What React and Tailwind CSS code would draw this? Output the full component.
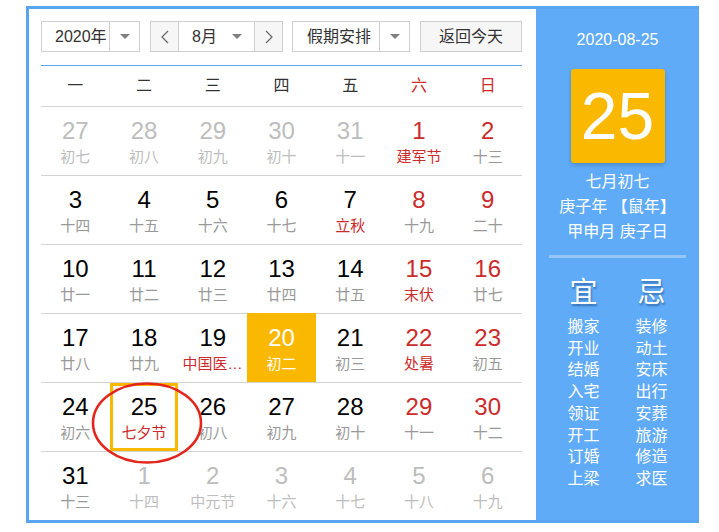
import React from 'react';

const weekdays = ['一', '二', '三', '四', '五', '六', '日'];

// out = other month, wk = weekend number red, hol = lunar text red
const rows = [
  [
    { d: 27, l: '初七', out: true },
    { d: 28, l: '初八', out: true },
    { d: 29, l: '初九', out: true },
    { d: 30, l: '初十', out: true },
    { d: 31, l: '十一', out: true },
    { d: 1, l: '建军节', wk: true, hol: true },
    { d: 2, l: '十三', wk: true },
  ],
  [
    { d: 3, l: '十四' },
    { d: 4, l: '十五' },
    { d: 5, l: '十六' },
    { d: 6, l: '十七' },
    { d: 7, l: '立秋', hol: true },
    { d: 8, l: '十九', wk: true },
    { d: 9, l: '二十', wk: true },
  ],
  [
    { d: 10, l: '廿一' },
    { d: 11, l: '廿二' },
    { d: 12, l: '廿三' },
    { d: 13, l: '廿四' },
    { d: 14, l: '廿五' },
    { d: 15, l: '末伏', wk: true, hol: true },
    { d: 16, l: '廿七', wk: true },
  ],
  [
    { d: 17, l: '廿八' },
    { d: 18, l: '廿九' },
    { d: 19, l: '中国医师节', hol: true },
    { d: 20, l: '初二', today: true },
    { d: 21, l: '初三' },
    { d: 22, l: '处暑', wk: true, hol: true },
    { d: 23, l: '初五', wk: true },
  ],
  [
    { d: 24, l: '初六' },
    { d: 25, l: '七夕节', hol: true, selected: true },
    { d: 26, l: '初八' },
    { d: 27, l: '初九' },
    { d: 28, l: '初十' },
    { d: 29, l: '十一', wk: true },
    { d: 30, l: '十二', wk: true },
  ],
  [
    { d: 31, l: '十三' },
    { d: 1, l: '十四', out: true },
    { d: 2, l: '中元节', out: true },
    { d: 3, l: '十六', out: true },
    { d: 4, l: '十七', out: true },
    { d: 5, l: '十八', out: true },
    { d: 6, l: '十九', out: true },
  ],
];

const good = ['搬家', '开业', '结婚', '入宅', '领证', '开工', '订婚', '上梁'];
const bad = ['装修', '动土', '安床', '出行', '安葬', '旅游', '修造', '求医'];

const Caret = () => (
  <svg width="10" height="6" viewBox="0 0 10 6">
    <path d="M0 0 L10 0 L5 5 Z" fill="#808080" />
  </svg>
);

const Chevron = ({ dir }) => (
  <svg width="8" height="14" viewBox="0 0 8 14">
    <polyline
      points={dir === 'left' ? '7,1 1,7 7,13' : '1,1 7,7 1,13'}
      fill="none"
      stroke="#666"
      strokeWidth="1.2"
    />
  </svg>
);

const DayCell = ({ cell }) => {
  let numColor = 'text-black';
  let lunarColor = 'text-[#999]';
  if (cell.wk) numColor = 'text-[#cc2b2b]';
  if (cell.hol) lunarColor = 'text-[#cc2b2b]';
  if (cell.out) {
    numColor = 'text-[#bdbdbd]';
    lunarColor = 'text-[#bdbdbd]';
  }
  if (cell.today) {
    numColor = 'text-white';
    lunarColor = 'text-white';
  }
  return (
    <div
      className={`flex h-[69px] min-w-0 flex-col items-center border-t pt-[10px] ${
        cell.today ? 'border-[#fbb800] bg-[#fbb800]' : 'border-[#d4d4d4]'
      } ${cell.selected ? 'shadow-[inset_0_0_0_3px_#fbb800]' : ''}`}
    >
      <div className={`text-[24px] leading-[28px] ${numColor}`}>{cell.d}</div>
      <div className={`mt-[3px] w-full truncate px-[4px] text-center text-[15px] leading-[18px] ${lunarColor}`}>
        {cell.l}
      </div>
    </div>
  );
};

const App = () => {
  return (
    <div className="relative min-h-screen bg-white pl-[26px] pt-[6px] font-['Liberation_Sans','Noto_Sans_CJK_SC',sans-serif]">
      <div className="flex h-[517px] w-[673px] border-[3px] border-r-0 border-[#58a5f2]">
        {/* calendar */}
        <div className="flex w-[507px] flex-col overflow-hidden bg-white pl-3 pr-[14px] pt-3">
          <div className="flex h-8 items-stretch text-[16px] text-[#333]">
            <div className="flex w-[99px] border border-[#cfcfcf]">
              <div className="flex flex-1 items-center pl-[13px]">2020年</div>
              <div className="flex w-[30px] items-center justify-center border-l border-[#cfcfcf]">
                <Caret />
              </div>
            </div>
            <div className="ml-[10px] flex w-[133px] border border-[#cfcfcf]">
              <div className="flex w-[27px] items-center justify-center bg-[#f6f6f6]">
                <Chevron dir="left" />
              </div>
              <div className="flex flex-1 items-center justify-between border-x border-[#cfcfcf] pl-[13px] pr-[12px]">
                <span>8月</span>
                <Caret />
              </div>
              <div className="flex w-[27px] items-center justify-center bg-[#f6f6f6]">
                <Chevron dir="right" />
              </div>
            </div>
            <div className="ml-[9px] flex w-[118px] border border-[#cfcfcf]">
              <div className="flex flex-1 items-center pl-[14px]">假期安排</div>
              <div className="flex w-[30px] items-center justify-center border-l border-[#cfcfcf]">
                <Caret />
              </div>
            </div>
            <button className="ml-[10px] flex w-[102px] items-center justify-center border border-[#cfcfcf] bg-[#f6f6f6] text-[#333]">
              返回今天
            </button>
          </div>

          <div className="mt-[13px] grid h-[42px] grid-cols-7 items-center border-t border-[#5aa7f5] text-[16px]">
            {weekdays.map((w, i) => (
              <div key={w} className={`text-center ${i >= 5 ? 'text-[#cc2b2b]' : 'text-[#333]'}`}>
                {w}
              </div>
            ))}
          </div>

          {rows.map((row, ri) => (
            <div key={ri} className="grid grid-cols-7">
              {row.map((cell, ci) => (
                <DayCell key={ci} cell={cell} />
              ))}
            </div>
          ))}
        </div>

        {/* side panel */}
        <aside className="flex w-[163px] flex-col items-center bg-[#5fabf8] pt-[21px] text-white">
          <div className="text-[16px] leading-[20px]">2020-08-25</div>
          <div className="mt-[19px] flex h-[94px] w-[94px] items-center justify-center rounded-[3px] bg-[#fbb800] shadow-[0_2px_4px_rgba(0,0,0,0.2)]">
            <span className="text-[66px] leading-none">25</span>
          </div>
          <div className="mt-[6px] flex flex-col items-center text-[16px] leading-[25px]">
            <div>七月初七</div>
            <div>庚子年 【鼠年】</div>
            <div>甲申月 庚子日</div>
          </div>
          <div className="mt-[11px] h-[3px] w-[137px] bg-[#94c6f9]" />
          <div className="mt-[18px] flex gap-[36px]">
            <div className="flex flex-col items-center">
              <div className="text-[28px] leading-[34px] [text-shadow:1px_2px_2px_rgba(0,40,100,0.45)]">宜</div>
              <div className="mt-[6px] flex flex-col items-center text-[16px] leading-[21.7px]">
                {good.map((g) => (
                  <div key={g}>{g}</div>
                ))}
              </div>
            </div>
            <div className="flex flex-col items-center">
              <div className="text-[28px] leading-[34px] [text-shadow:1px_2px_2px_rgba(0,40,100,0.45)]">忌</div>
              <div className="mt-[6px] flex flex-col items-center text-[16px] leading-[21.7px]">
                {bad.map((b) => (
                  <div key={b}>{b}</div>
                ))}
              </div>
            </div>
          </div>
        </aside>
      </div>

      {/* hand-drawn red circle annotation */}
      <svg className="pointer-events-none absolute left-[89px] top-[380px]" width="116" height="86" viewBox="0 0 116 86">
        <ellipse cx="58" cy="43" rx="54" ry="39.5" fill="none" stroke="#e3261c" strokeWidth="2.6" />
      </svg>
    </div>
  );
};

export default App;
